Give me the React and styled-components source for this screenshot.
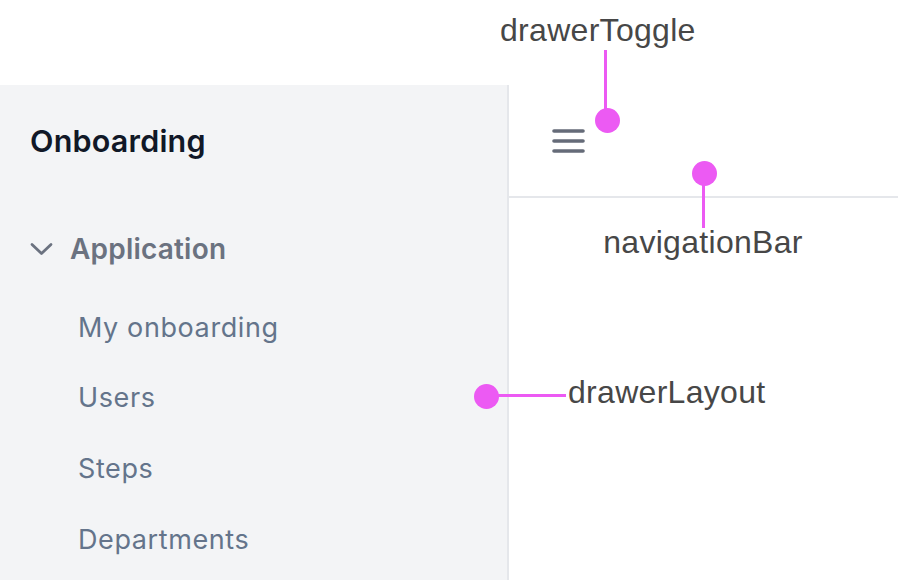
import React from "react";
import styled, { createGlobalStyle } from "styled-components";

const GlobalStyle = createGlobalStyle`
  html, body {
    margin: 0;
    padding: 0;
    background: #ffffff;
  }
  * {
    box-sizing: border-box;
  }
`;

const Page = styled.div`
  position: relative;
  width: 900px;
  height: 582px;
  overflow: hidden;
  background: #ffffff;
  font-family: Inter, "Noto Sans", sans-serif;
`;

const TopGap = styled.div`
  height: 85px;
`;

const Frame = styled.div`
  display: flex;
  width: 898px;
  height: 495px;
`;

const Sidebar = styled.aside`
  width: 509px;
  flex-shrink: 0;
  background: #f3f4f6;
  border-right: 2px solid #e5e7eb;
  padding: 0 30px;
`;

const SidebarHeader = styled.div`
  height: 111px;
  display: flex;
  align-items: center;
`;

const Title = styled.h1`
  margin: 0;
  font-size: 30.5px;
  font-weight: 600;
  color: #111827;
  letter-spacing: 0.2px;
`;

const GroupToggle = styled.div`
  margin-top: 18px;
  height: 70px;
  display: flex;
  align-items: center;
  gap: 17px;
  color: #6b7280;
  font-size: 28px;
  font-weight: 600;
  letter-spacing: 0.2px;
`;

const NavList = styled.ul`
  list-style: none;
  margin: 8px 0 0;
  padding: 0 0 0 48px;
`;

const NavItem = styled.li`
  height: 70.6px;
  display: flex;
  align-items: center;
  font-size: 27px;
  font-weight: 400;
  color: #64748b;
  letter-spacing: 0.6px;
`;

const Main = styled.main`
  flex: 1;
  display: flex;
  flex-direction: column;
`;

const NavigationBar = styled.header`
  height: 113px;
  border-bottom: 2px solid #e5e7eb;
  display: flex;
  align-items: center;
  padding-left: 43px;
`;

const MenuButton = styled.button`
  border: 0;
  background: transparent;
  padding: 0;
  display: flex;
  cursor: pointer;
`;

const Overlay = styled.div`
  position: absolute;
  inset: 0;
  pointer-events: none;
`;

const Label = styled.div`
  position: absolute;
  left: ${(p) => p.x}px;
  top: ${(p) => p.y}px;
  transform: ${(p) => (p.center ? "translateX(-50%)" : "none")};
  font-family: "Liberation Sans", Arial, sans-serif;
  font-size: 32px;
  color: #474747;
  white-space: nowrap;
  letter-spacing: 0.3px;
`;

const Dot = styled.div`
  position: absolute;
  left: ${(p) => p.x - 12}px;
  top: ${(p) => p.y - 12}px;
  width: 25px;
  height: 25px;
  border-radius: 50%;
  background: #ec5af3;
`;

const Line = styled.div`
  position: absolute;
  left: ${(p) => p.x}px;
  top: ${(p) => p.y}px;
  width: ${(p) => p.w}px;
  height: ${(p) => p.h}px;
  background: #ec5af3;
`;

const ChevronDown = () => (
  <svg width="23" height="14" viewBox="0 0 23 14" fill="none">
    <path
      d="M2 2.5 L11.5 11.5 L21 2.5"
      stroke="#6b7280"
      strokeWidth="2.8"
      strokeLinecap="round"
      strokeLinejoin="round"
    />
  </svg>
);

const Hamburger = () => (
  <svg width="34" height="26" viewBox="0 0 34 26" fill="none">
    <g stroke="#656b78" strokeWidth="3.6" strokeLinecap="round">
      <line x1="2" y1="3" x2="31" y2="3" />
      <line x1="2" y1="13" x2="31" y2="13" />
      <line x1="2" y1="23" x2="31" y2="23" />
    </g>
  </svg>
);

const items = ["My onboarding", "Users", "Steps", "Departments"];

export default function App() {
  return (
    <>
      <GlobalStyle />
      <Page>
        <TopGap />
        <Frame>
          <Sidebar>
            <SidebarHeader>
              <Title>Onboarding</Title>
            </SidebarHeader>
            <GroupToggle>
              <ChevronDown />
              <span>Application</span>
            </GroupToggle>
            <NavList>
              {items.map((item) => (
                <NavItem key={item}>{item}</NavItem>
              ))}
            </NavList>
          </Sidebar>
          <Main>
            <NavigationBar>
              <MenuButton aria-label="Toggle drawer">
                <Hamburger />
              </MenuButton>
            </NavigationBar>
          </Main>
        </Frame>

        <Overlay>
          <Label x={500} y={12}>drawerToggle</Label>
          <Line x={604} y={50} w={3} h={66} />
          <Dot x={607} y={120} />

          <Dot x={704} y={173} />
          <Line x={702} y={173} w={3} h={55} />
          <Label x={703} y={224} center>navigationBar</Label>

          <Dot x={486} y={396} />
          <Line x={486} y={394} w={80} h={3} />
          <Label x={568} y={374}>drawerLayout</Label>
        </Overlay>
      </Page>
    </>
  );
}
